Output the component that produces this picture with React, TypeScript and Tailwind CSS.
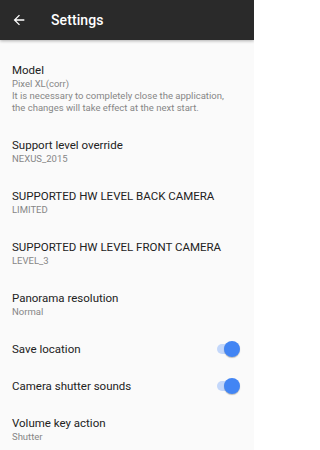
import { useState } from "react";

type Row =
	| { kind: "text"; title: string; summary: string[] }
	| { kind: "switch"; title: string; on: boolean };

const rows: Row[] = [
	{
		kind: "text",
		title: "Model",
		summary: [
			"Pixel XL(corr)",
			"It is necessary to completely close the application,",
			"the changes will take effect at the next start.",
		],
	},
	{ kind: "text", title: "Support level override", summary: ["NEXUS_2015"] },
	{ kind: "text", title: "SUPPORTED HW LEVEL BACK CAMERA", summary: ["LIMITED"] },
	{ kind: "text", title: "SUPPORTED HW LEVEL FRONT CAMERA", summary: ["LEVEL_3"] },
	{ kind: "text", title: "Panorama resolution", summary: ["Normal"] },
	{ kind: "switch", title: "Save location", on: true },
	{ kind: "switch", title: "Camera shutter sounds", on: true },
	{ kind: "text", title: "Volume key action", summary: ["Shutter"] },
];

function Toggle({ on, onChange }: { on: boolean; onChange: () => void }) {
	return (
		<button onClick={onChange} className="relative w-[24px] h-[16px] shrink-0">
			<span
				className={`absolute left-[1px] right-[2px] top-[3px] h-[10px] rounded-full ${
					on ? "bg-[#c3d7fa]" : "bg-[#b9b9b9]"
				}`}
			/>
			<span
				className={`absolute top-0 w-[16px] h-[16px] rounded-full shadow-[0_1px_1px_rgba(0,0,0,0.25)] ${
					on ? "right-0 bg-[#4285f4]" : "left-0 bg-[#f1f1f1]"
				}`}
			/>
		</button>
	);
}

export default function App() {
	const [switches, setSwitches] = useState<Record<string, boolean>>({
		"Save location": true,
		"Camera shutter sounds": true,
	});

	return (
		<div
			className="w-[254px] h-[450px] overflow-hidden bg-[#fafafa] flex flex-col"
			style={{ fontFamily: "Roboto, 'Noto Sans', sans-serif" }}
		>
			{/* Toolbar */}
			<div className="h-[40px] shrink-0 bg-[#2a2a2a] flex items-center shadow-[0_1px_3px_rgba(0,0,0,0.3)] relative z-10">
				<svg className="ml-[11px] w-[16px] h-[16px]" viewBox="0 0 24 24" fill="#ffffff">
					<path d="M20 11H7.83l5.59-5.59L12 4l-8 8 8 8 1.41-1.41L7.83 13H20v-2z" />
				</svg>
				<span className="ml-[24px] text-[14px] font-medium text-white tracking-[0.1px]">Settings</span>
			</div>

			{/* Preference list */}
			<div className="pt-[9.5px]">
				{rows.map((row) =>
					row.kind === "text" ? (
						<div key={row.title} className="pl-[12px] pr-[12px] pt-[12px] pb-[11px]">
							<div className="text-[11.5px] leading-[16px] text-[#222222]">{row.title}</div>
							{row.summary.map((s) => (
								<div key={s} className="text-[9.5px] leading-[12px] text-[#868686]">
									{s}
								</div>
							))}
						</div>
					) : (
						<div key={row.title} className="pl-[12px] pr-[14px] pt-[12px] pb-[9px] flex items-center justify-between">
							<div className="text-[11.5px] leading-[16px] text-[#222222]">{row.title}</div>
							<Toggle
								on={switches[row.title]}
								onChange={() => setSwitches((s) => ({ ...s, [row.title]: !s[row.title] }))}
							/>
						</div>
					)
				)}
			</div>
		</div>
	);
}
